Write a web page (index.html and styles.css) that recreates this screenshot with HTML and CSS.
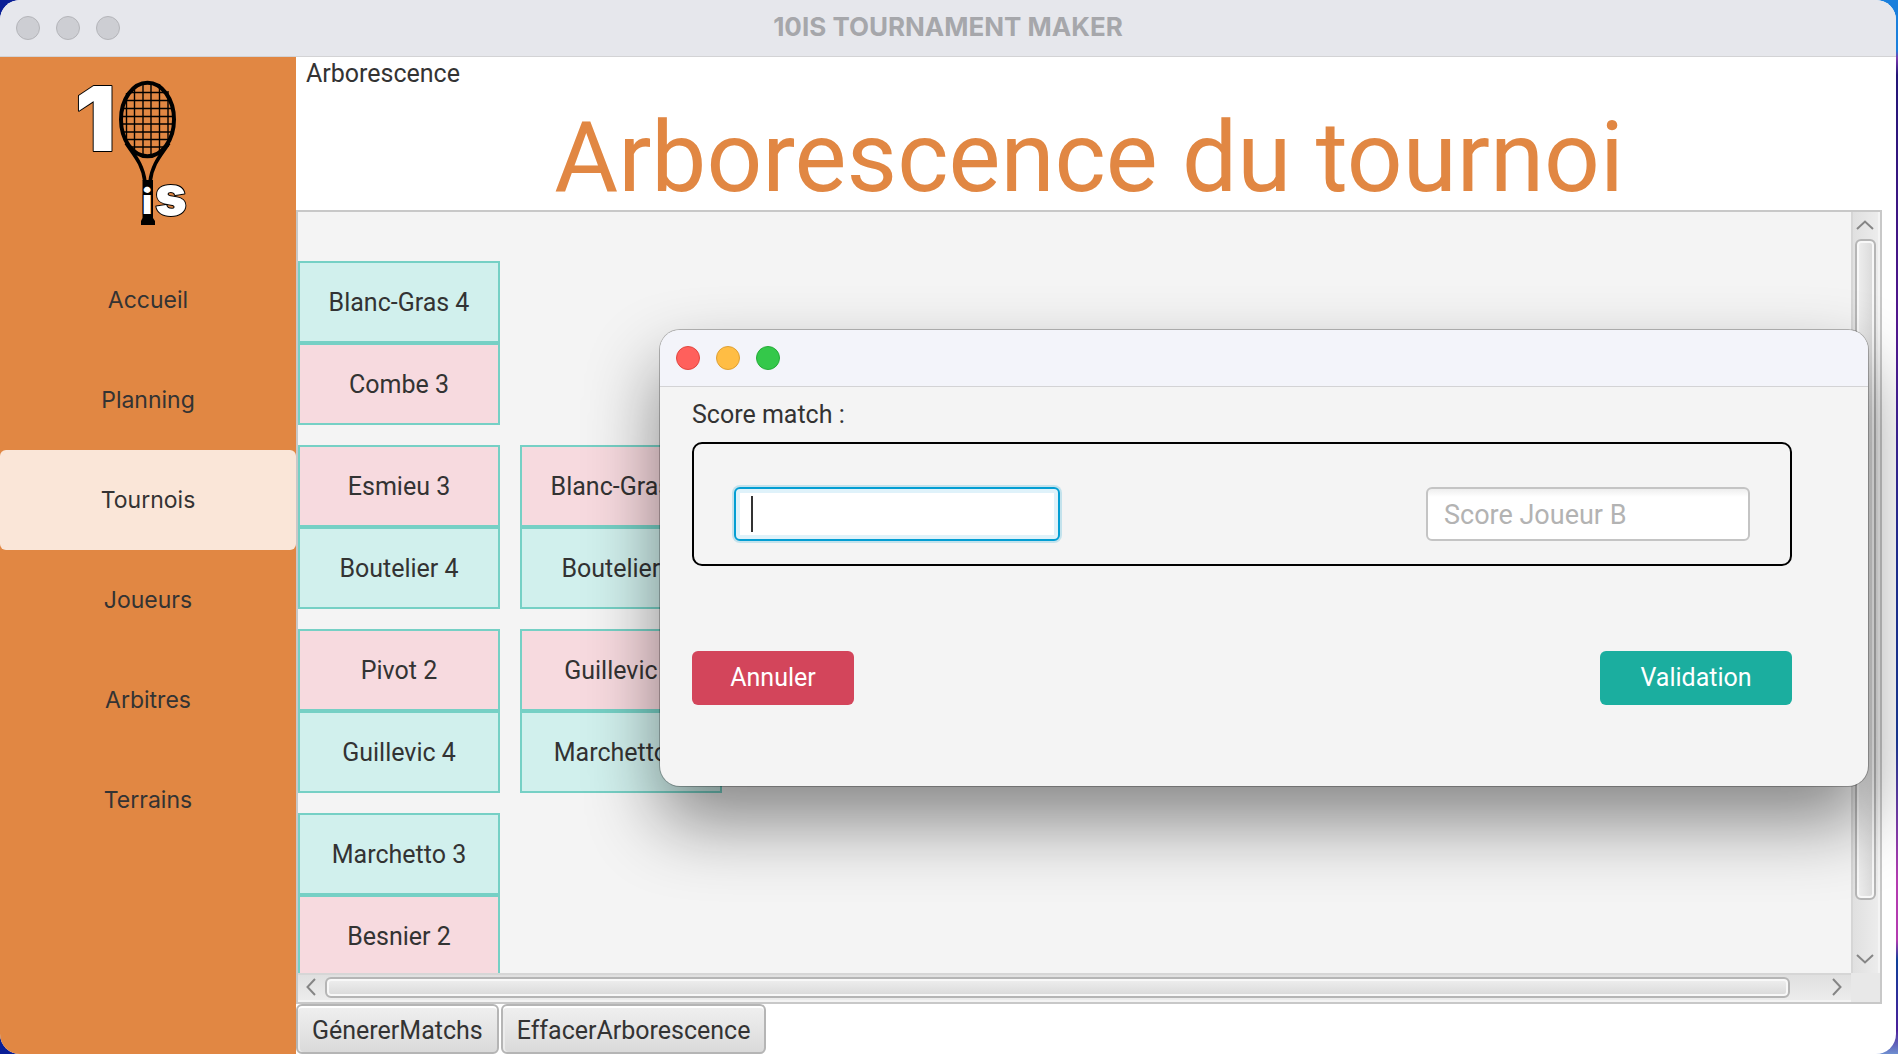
FILE: index.html
```html
<!DOCTYPE html>
<html lang="fr">
<head>
<meta charset="utf-8">
<title>10IS TOURNAMENT MAKER</title>
<link rel="stylesheet" href="styles.css">
</head>
<body>
<div class="window">
  <header class="titlebar">
    <div class="lights"><span class="light"></span><span class="light"></span><span class="light"></span></div>
    <div class="window-title">10IS TOURNAMENT MAKER</div>
  </header>
  <div class="content">
    <aside class="sidebar">
      <svg class="logo" viewBox="60 70 150 160" role="img" aria-label="10is">
        <g fill="none" stroke="#000">
          <g stroke-width="1.4">
            <path d="M126.500 93V145M134.500 86V153M143 83V156M151 83V156M159.500 84V154M168 91V147"/>
            <path d="M130 92.500H165M124 100.500H171M122 108.500H174M121 116.500H175M121 124H175M122 132H173M125 139.500H170M132 147H163"/>
          </g>
          <ellipse cx="147.500" cy="119.500" rx="26.500" ry="36.800" stroke-width="4"/>
          <path d="M126 143C134 155 143 164 145 182M169 143C161 155 152 164 150 182" stroke-width="3.600"/>
        </g>
        <path d="M142.500 180h10.500v38l2 3v4h-14v-4l1.500-3z"/>
        <g class="logo-text">
          <text x="75" y="151" font-size="90">1</text>
          <text x="142" y="214" font-size="35">i</text>
          <text x="155" y="215" font-size="54">s</text>
        </g>
      </svg>
      <nav class="nav">
        <a href="#accueil">Accueil</a>
        <a href="#planning">Planning</a>
        <a href="#tournois" class="active" aria-current="page">Tournois</a>
        <a href="#joueurs">Joueurs</a>
        <a href="#arbitres">Arbitres</a>
        <a href="#terrains">Terrains</a>
      </nav>
    </aside>
    <main class="main">
      <div class="crumb">Arborescence</div>
      <h1>Arborescence du tournoi</h1>
      <section class="scroll-pane">
        <div class="viewport">
          <div class="round">
            <div class="match"><div class="player win">Blanc-Gras 4</div><div class="player lose">Combe 3</div></div>
            <div class="match"><div class="player lose">Esmieu 3</div><div class="player win">Boutelier 4</div></div>
            <div class="match"><div class="player lose">Pivot 2</div><div class="player win">Guillevic 4</div></div>
            <div class="match"><div class="player win">Marchetto 3</div><div class="player lose">Besnier 2</div></div>
          </div>
          <div class="round">
            <div class="match"><div class="player lose">Blanc-Gras 3</div><div class="player win">Boutelier 4</div></div>
            <div class="match"><div class="player lose">Guillevic 2</div><div class="player win">Marchetto 4</div></div>
          </div>
        </div>
        <div class="bar vertical">
          <button type="button" class="arrow" aria-label="Haut"><svg viewBox="0 0 18 10"><path d="M1 9 9 1.500 17 9"/></svg></button>
          <div class="track"><div class="thumb"></div></div>
          <button type="button" class="arrow" aria-label="Bas"><svg viewBox="0 0 18 10"><path d="M1 1 9 8.500 17 1"/></svg></button>
        </div>
        <div class="bar horizontal">
          <button type="button" class="arrow" aria-label="Gauche"><svg viewBox="0 0 10 18"><path d="M9 1 1.500 9 9 17"/></svg></button>
          <div class="track"><div class="thumb"></div></div>
          <button type="button" class="arrow" aria-label="Droite"><svg viewBox="0 0 10 18"><path d="M1 1 8.500 9 1 17"/></svg></button>
        </div>
      </section>
      <div class="actions">
        <button type="button">GénererMatchs</button>
        <button type="button">EffacerArborescence</button>
      </div>
    </main>
  </div>
  <form class="dialog" role="dialog" aria-label="Score match">
    <div class="titlebar">
      <div class="lights"><span class="light red"></span><span class="light yellow"></span><span class="light green"></span></div>
    </div>
    <div class="dialog-body">
      <label for="score-a">Score match :</label>
      <div class="scores">
        <input class="focused" id="score-a" type="text">
        <input id="score-b" type="text" placeholder="Score Joueur B" aria-label="Score Joueur B">
      </div>
      <div class="dialog-actions">
        <button type="button" class="cancel">Annuler</button>
        <button type="button" class="confirm">Validation</button>
      </div>
    </div>
  </form>
</div>
</body>
</html>
```
FILE: styles.css
```css
* { box-sizing: border-box; }

body {
  margin: 0;
  padding-right: 2px;
  height: 100vh;
  overflow: hidden;
  font-family: Roboto, "Liberation Sans", sans-serif;
  font-size: 25px;
  line-height: 32px;
  color: #333;
  background: linear-gradient(90deg, #0a1f96 0 50%, transparent 50%),
    linear-gradient(180deg, #1a7fdc 0 50px, #7a3ab0 58px, #221577 75px, #52178e 320px, #1d2c8c 560px, #17358c 740px, #b43bb0 880px, #b43bb0 940px, #0f3f9a 960px, #4a1f9a 1030px, #6f8fd0 100%);
}

button, input { font: inherit; color: inherit; }

.window {
  position: relative;
  display: flex;
  flex-direction: column;
  height: 100%;
  border-radius: 20px;
  overflow: hidden;
  background: #fff;
}

.titlebar {
  display: grid;
  grid-template-columns: 1fr auto 1fr;
  align-items: center;
  flex: none;
  height: 57px;
  padding: 0 16px;
  background: #e6e7ec;
  border-bottom: 1px solid #d3d3d5;
}

.lights { display: flex; gap: 16px; }

.light {
  width: 24px;
  height: 24px;
  border-radius: 50%;
  border: 1px solid #b4b5b9;
  background: #cdced3;
}
.red { background: #ff605c; border-color: #e2463f; }
.yellow { background: #ffbd44; border-color: #dfa033; }
.green { background: #34c84a; border-color: #24ac37; }

.window-title {
  padding-bottom: 2px;
  font-family: Inter, sans-serif;
  font-size: 26px;
  font-weight: 700;
  color: #a6a7ab;
}

.content { display: flex; flex: 1; min-height: 0; }

.sidebar {
  flex: none;
  width: 296px;
  font-family: Inter, sans-serif;
  font-size: 23px;
  background: #e18743;
}

.logo {
  display: block;
  width: 150px;
  height: 160px;
  margin: 13px 0 20px 60px;
  overflow: visible;
}

.logo-text {
  font-weight: 900;
  fill: #fff;
  stroke: #000;
  stroke-width: 2px;
  stroke-linejoin: round;
  paint-order: stroke;
}

.nav a {
  display: flex;
  align-items: center;
  justify-content: center;
  height: 100px;
  border-radius: 6px;
  color: #333;
  text-decoration: none;
}
.nav .active { background: #fae6d8; }

.main { display: flex; flex-direction: column; flex: 1; min-width: 0; }

.crumb { padding: 1px 0 0 10px; }

h1 {
  margin: 0;
  padding-right: 14px;
  height: 120px;
  font-size: 98px;
  line-height: 136px;
  font-weight: 400;
  text-align: center;
  white-space: nowrap;
  color: #e18743;
}

.scroll-pane {
  display: grid;
  grid-template-columns: minmax(0, 1fr) 29px;
  grid-template-rows: minmax(0, 1fr) 29px;
  flex: 1;
  min-height: 0;
  margin-right: 14px;
  border: 2px solid #c8c8c8;
  background: #e8e8e8;
}

.viewport {
  display: flex;
  align-items: flex-start;
  gap: 20px;
  padding-top: 49px;
  overflow: hidden;
  background: #f4f4f4;
}

.round { display: flex; flex-direction: column; gap: 20px; width: 202px; }
.round + .round { padding-top: 184px; }

.player {
  display: flex;
  align-items: center;
  justify-content: center;
  height: 82px;
  padding-top: 2px;
  border: 2px solid #76d0c5;
  white-space: nowrap;
}
.win { background: #d1f0ed; }
.lose { background: #f7dadf; }

.bar { display: flex; }
.vertical {
  flex-direction: column;
  padding-right: 2px;
  border-left: 2px solid #d6d6d6;
  border-right: 2px solid #f4f4f4;
  background: linear-gradient(90deg, #e0e0e0, #ececec);
}
.horizontal {
  border-top: 2px solid #d6d6d6;
  border-bottom: 2px solid #f4f4f4;
  padding-bottom: 2px;
  background: linear-gradient(#e0e0e0, #ececec);
}

.arrow {
  display: flex;
  align-items: center;
  justify-content: center;
  flex: none;
  width: 23px;
  height: 27px;
  padding: 0 0 2px;
  border: 0;
  background: none;
}
.horizontal .arrow { width: 27px; height: 23px; padding: 0 2px 0 0; }
.arrow svg { width: 18px; height: 10px; fill: none; stroke: #858585; stroke-width: 2; }
.horizontal .arrow svg { width: 10px; height: 18px; }

.track { display: flex; flex: 1; }
.vertical .track { flex-direction: column; padding-left: 2px; }
.horizontal .track { padding-top: 2px; }

.thumb {
  border: 2px solid #b5b5b5;
  border-radius: 6px;
  box-shadow: inset 0 0 0 2px #f8f8f8;
}
.vertical .thumb { height: 93.5%; background: linear-gradient(90deg, #efefef, #d9d9d9); }
.horizontal .thumb { width: 97.7%; background: linear-gradient(#efefef, #d9d9d9); }

.actions { display: flex; gap: 2px; flex: none; height: 50px; }
.actions button {
  padding: 4px 14px 0;
  border: 2px solid #b5b5b5;
  border-radius: 6px;
  background: linear-gradient(#f0f0f0, #dadada);
  box-shadow: inset 0 2px 0 #fff, inset 2px 0 0 #ececec;
}

.dialog {
  position: absolute;
  top: 330px;
  left: 660px;
  right: 28px;
  border-radius: 20px;
  background: #f4f4f4;
  box-shadow: 0 0 0 1px rgba(0, 0, 0, .25), 0 36px 72px rgba(0, 0, 0, .45);
}
.dialog .titlebar { border-radius: 20px 20px 0 0; background: #f3f4fa; }

.dialog-body { padding: 12px 76px 81px 32px; }
.dialog-body label { display: block; margin-bottom: 11px; }

.scores {
  display: flex;
  justify-content: space-between;
  padding: 43px 40px 23px;
  border: 2px solid #000;
  border-radius: 10px;
}
.scores input {
  width: 324px;
  height: 54px;
  padding: 2px 16px 0;
  border: 2px solid #c4c4c4;
  border-radius: 6px;
  font-size: 27px;
  background: linear-gradient(#eee, #fff 8px);
  outline: none;
}
.scores input::placeholder { color: #b3b3b3; opacity: 1; }
.scores .focused {
  width: 326px;
  border-color: #039ed3;
  background: linear-gradient(#333, #333) 15px 7px / 2px 36px no-repeat, #fff;
  box-shadow: 0 0 0 2px #c3e2ec, inset 0 0 0 4px #dff2fa;
}

.dialog-actions { display: flex; justify-content: space-between; margin-top: 85px; }
.dialog-actions button { height: 54px; border: 0; border-radius: 6px; color: #fff; }
.cancel { width: 162px; background: #d3455b; }
.confirm { width: 192px; background: #1bae9f; }
```
